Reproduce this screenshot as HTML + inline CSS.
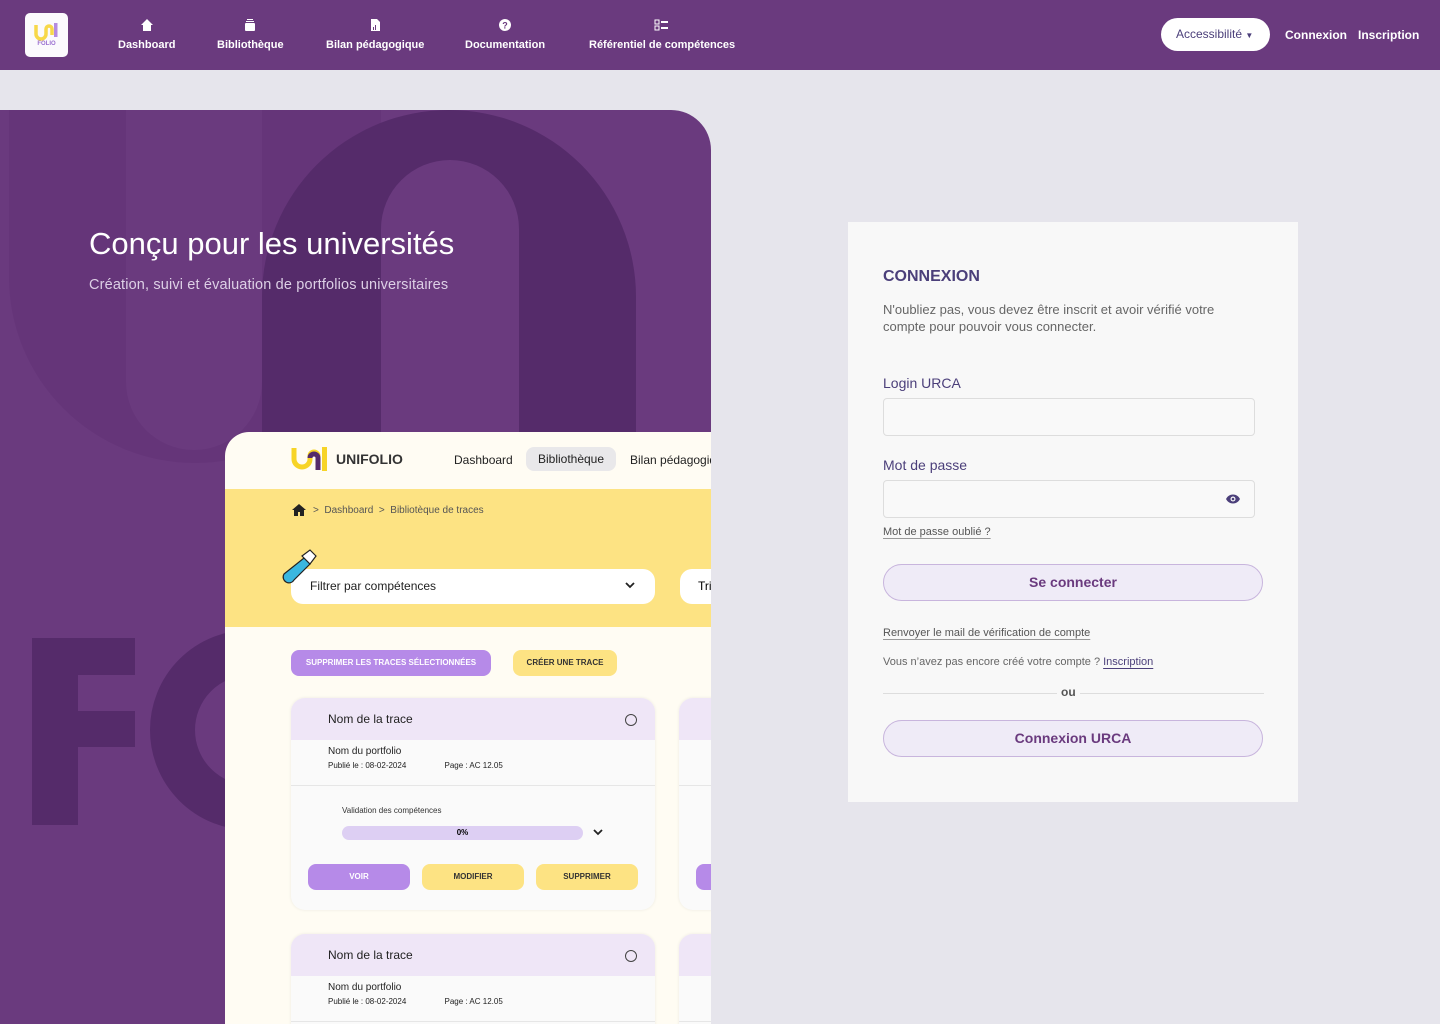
<!DOCTYPE html>
<html><head><meta charset="utf-8"><style>
*{box-sizing:border-box;margin:0;padding:0}
html,body{width:1440px;height:1024px;overflow:hidden}
body{background:#e6e5ec;font-family:"Liberation Sans",sans-serif;position:relative}
.nav{position:absolute;left:0;top:0;width:1440px;height:70px;background:#6a3a7e;color:#fff}
.logo{position:absolute;left:25px;top:13px;width:43px;height:44px;background:#fbfafd;border-radius:5px}
.ni{position:absolute;top:18px;font-size:11px;font-weight:bold;text-align:center;color:#fff;white-space:nowrap}
.ni svg{display:block;margin:0 auto 7px}
.acc{position:absolute;left:1161px;top:18px;width:109px;height:33px;background:#fff;border-radius:17px;color:#4b3f7a;font-size:12px;line-height:33px;padding-left:15px}
.panel{position:absolute;left:0;top:110px;width:711px;height:914px;background:#6a3a7e;border-top-right-radius:40px;overflow:hidden}
.a{position:absolute}
.mock{position:absolute;left:225px;top:432px;width:486px;height:592px;background:#fffcf3;border-top-left-radius:24px;overflow:hidden}
.card{position:absolute;left:66px;width:364px;background:#fafafa;border-radius:14px;box-shadow:0 0 3px rgba(0,0,0,.08);overflow:hidden}
.ch{height:42px;background:#efe6f7;font-size:12px;color:#222;padding:14px 0 0 37px;position:relative}
.rad{position:absolute;right:18px;top:16px;width:12px;height:12px;border:1px solid #444;border-radius:50%}
.cb{padding:6px 0 0 37px;font-size:10px;color:#222;height:46px;border-bottom:1px solid #e6e6e6}
.sm{font-size:8px;margin-top:4px}
.btn{position:absolute;top:166px;width:102px;height:26px;border-radius:8px;font-size:8px;font-weight:bold;text-align:center;line-height:26px}
.login{position:absolute;left:848px;top:222px;width:450px;height:580px;background:#f8f8f8}
.lbl{position:absolute;left:35px;font-size:14px;color:#4b3f7a}
.inp{position:absolute;left:35px;width:372px;height:38px;border:1px solid #ddd;border-radius:4px;background:#f9f9f9}
.pb{position:absolute;left:35px;width:380px;height:37px;border:1px solid #c8b5dd;border-radius:19px;background:#efebf7;color:#6a3a7e;font-weight:bold;font-size:14px;text-align:center;line-height:35px}
.lk{position:absolute;left:35px;font-size:12px;color:#555;text-decoration:underline;text-decoration-color:#999;text-underline-offset:3px}
</style></head><body>
<div class="nav">
 <div class="logo"><svg width="43" height="44" viewBox="0 0 43 44"><path d="M11 12v9a5 5 0 0 0 10 0v-5a3 3 0 0 1 6 0v6" stroke="#f7d84a" stroke-width="3.5" fill="none"/><rect x="29" y="10" width="3.5" height="14" fill="#b48be0"/><text x="21.5" y="32" font-size="6" fill="#9a6fd0" text-anchor="middle" font-family="Liberation Sans" font-weight="bold">FOLIO</text></svg></div>
 <div class="ni" style="left:118px"><svg width="14" height="14" viewBox="0 0 14 14"><path d="M7 1L1 7h2v6h8V7h2z" fill="#fff"/></svg>Dashboard</div>
 <div class="ni" style="left:217px"><svg width="14" height="14" viewBox="0 0 14 14"><rect x="2" y="5" width="10" height="8" rx="1" fill="#fff"/><rect x="3" y="3" width="8" height="1" fill="#fff"/><rect x="4" y="1" width="6" height="1" fill="#fff"/></svg>Bibliothèque</div>
 <div class="ni" style="left:326px"><svg width="14" height="14" viewBox="0 0 14 14"><path d="M3 1h6l3 3v9H3z" fill="#fff"/><rect x="5" y="9" width="1" height="3" fill="#6a3a7e"/><rect x="7" y="7" width="1" height="5" fill="#6a3a7e"/></svg>Bilan pédagogique</div>
 <div class="ni" style="left:465px"><svg width="14" height="14" viewBox="0 0 14 14"><circle cx="7" cy="7" r="6" fill="#fff"/><text x="7" y="10.5" font-size="9" text-anchor="middle" fill="#6a3a7e" font-weight="bold" font-family="Liberation Sans">?</text></svg>Documentation</div>
 <div class="ni" style="left:589px"><svg width="16" height="14" viewBox="0 0 16 14"><rect x="1" y="2" width="4" height="4" fill="none" stroke="#fff"/><rect x="7" y="3" width="7" height="2" fill="#fff"/><rect x="1" y="8" width="4" height="4" fill="none" stroke="#fff"/><rect x="7" y="9" width="7" height="2" fill="#fff"/></svg>Référentiel de compétences</div>
 <div class="acc">Accessibilité <span style="font-size:8px">▼</span></div>
 <div style="position:absolute;left:1285px;top:28px;font-size:12px;font-weight:bold">Connexion</div>
 <div style="position:absolute;left:1358px;top:28px;font-size:12px;font-weight:bold">Inscription</div>
</div>

<div class="panel">
 <div class="a" style="left:9px;top:0;width:372px;height:353px;background:#653579;border-radius:0 0 186px 186px"></div>
 <div class="a" style="left:126px;top:0;width:136px;height:340px;background:#6a3a7e;border-radius:0 0 68px 68px"></div>
 <div class="a" style="left:262px;top:0;width:374px;height:914px;background:#552b6a;border-radius:187px 187px 0 0"></div>
 <div class="a" style="left:381px;top:50px;width:138px;height:864px;background:#6a3a7e;border-radius:69px 69px 0 0"></div>
 <div class="a" style="left:32px;top:528px;width:103px;height:187px;background:#552b6a"></div>
 <div class="a" style="left:78px;top:565px;width:57px;height:36px;background:#6a3a7e"></div>
 <div class="a" style="left:78px;top:637px;width:57px;height:78px;background:#6a3a7e"></div>
 <div class="a" style="left:150px;top:520px;width:200px;height:200px;border:45px solid #552b6a;border-radius:50%"></div>
 <div class="a" style="left:89px;top:116px;font-size:31px;color:#fff">Conçu pour les universités</div>
 <div class="a" style="left:89px;top:167px;font-size:14.5px;color:#ddd0e6;letter-spacing:0.15px">Création, suivi et évaluation de portfolios universitaires</div>
</div>

<div class="mock">
 <svg class="a" style="left:65px;top:14px" width="40" height="26" viewBox="0 0 40 26"><path d="M4 2v11a8 8 0 0 0 16 0v-3a4 4 0 0 1 8 0v14" stroke="#f7d427" stroke-width="5" fill="none"/><path d="M20 12a4 4 0 0 1 8 0v12" stroke="#552b6a" stroke-width="5" fill="none"/><rect x="32" y="1" width="5" height="24" fill="#f7d427"/></svg>
 <div class="a" style="left:111px;top:19px;font-size:14px;font-weight:bold;color:#333">UNIFOLIO</div>
 <div class="a" style="left:229px;top:21px;font-size:12px;color:#222">Dashboard</div>
 <div class="a" style="left:301px;top:15px;width:90px;height:24px;background:#e9e8ea;border-radius:8px;font-size:12px;color:#222;text-align:center;line-height:24px">Bibliothèque</div>
 <div class="a" style="left:405px;top:21px;font-size:12px;color:#222;white-space:nowrap">Bilan pédagogique</div>
 <div class="a" style="left:0;top:57px;width:486px;height:138px;background:#fde383"></div>
 <svg class="a" style="left:67px;top:72px" width="14" height="12" viewBox="0 0 14 12"><path d="M7 0L0 6h2v6h4V8h2v4h4V6h2z" fill="#222"/></svg>
 <div class="a" style="left:88px;top:73px;font-size:10px;color:#555">&gt;&nbsp; Dashboard &nbsp;&gt;&nbsp; Bibliotèque de traces</div>
 <div class="a" style="left:66px;top:137px;width:364px;height:35px;background:#fff;border-radius:12px;font-size:12px;color:#222;padding:10px 0 0 19px">Filtrer par compétences<svg style="position:absolute;right:20px;top:13px" width="10" height="7" viewBox="0 0 10 7"><path d="M1 1l4 4 4-4" stroke="#222" stroke-width="1.8" fill="none"/></svg></div>
 <div class="a" style="left:455px;top:137px;width:60px;height:35px;background:#fff;border-radius:12px;font-size:12px;padding:10px 0 0 18px">Tri</div>
 <svg class="a" style="left:55px;top:112px" width="42" height="40" viewBox="0 0 42 40"><path d="M4 30l20-16 6 6-16 16a4 4 0 0 1-10-6z" fill="#3ab7e0" stroke="#222" stroke-width="1.2"/><path d="M22 12l8-6 6 6-6 8z" fill="#fff" stroke="#222" stroke-width="1.2"/></svg>
 <div class="a" style="left:66px;top:218px;width:200px;height:26px;background:#b68ae8;border-radius:8px;color:#fff;font-size:8px;font-weight:bold;text-align:center;line-height:26px">SUPPRIMER LES TRACES SÉLECTIONNÉES</div>
 <div class="a" style="left:288px;top:218px;width:104px;height:26px;background:#fde383;border-radius:8px;color:#333;font-size:8px;font-weight:bold;text-align:center;line-height:26px">CRÉER UNE TRACE</div>
 <div class="card" style="top:266px;height:212px">
  <div class="ch">Nom de la trace<div class="rad"></div></div>
  <div class="cb">Nom du portfolio<div class="sm">Publié le : 08-02-2024 <span style="margin-left:36px">Page : AC 12.05</span></div></div>
  <div class="a" style="left:51px;top:108px;font-size:8px;color:#333">Validation des compétences</div>
  <div class="a" style="left:51px;top:128px;width:241px;height:14px;background:#ddcff3;border-radius:7px;font-size:8px;font-weight:bold;text-align:center;line-height:14px">0%</div>
  <svg class="a" style="left:302px;top:131px" width="10" height="7" viewBox="0 0 10 7"><path d="M1 1l4 4 4-4" stroke="#222" stroke-width="1.8" fill="none"/></svg>
  <div class="btn" style="left:17px;background:#b68ae8;color:#fff">VOIR</div>
  <div class="btn" style="left:131px;background:#fde383;color:#333">MODIFIER</div>
  <div class="btn" style="left:245px;background:#fde383;color:#333">SUPPRIMER</div>
 </div>
 <div class="card" style="left:454px;top:266px;height:212px"><div class="ch"></div><div class="cb"></div><div class="btn" style="left:17px;background:#b68ae8"></div></div>
 <div class="card" style="top:502px;height:120px">
  <div class="ch">Nom de la trace<div class="rad"></div></div>
  <div class="cb">Nom du portfolio<div class="sm">Publié le : 08-02-2024 <span style="margin-left:36px">Page : AC 12.05</span></div></div>
 </div>
 <div class="card" style="left:454px;top:502px;height:120px"><div class="ch"></div><div class="cb"></div></div>
</div>

<div class="login">
 <div class="a" style="left:35px;top:46px;font-size:16px;font-weight:bold;color:#4b3f7a">CONNEXION</div>
 <div class="a" style="left:35px;top:79px;width:360px;font-size:13px;line-height:17px;color:#666">N'oubliez pas, vous devez être inscrit et avoir vérifié votre compte pour pouvoir vous connecter.</div>
 <div class="lbl" style="top:153px">Login URCA</div>
 <div class="inp" style="top:176px"></div>
 <div class="lbl" style="top:235px">Mot de passe</div>
 <div class="inp" style="top:258px"><svg style="position:absolute;right:13px;top:12px" width="16" height="12" viewBox="0 0 16 12"><path d="M1 6c3-6 11-6 14 0-3 6-11 6-14 0z" fill="#4b3f7a"/><circle cx="8" cy="6" r="2.5" fill="#f9f9f9"/><circle cx="8" cy="6" r="1.3" fill="#4b3f7a"/></svg></div>
 <div class="lk" style="top:304px;font-size:11px">Mot de passe oublié ?</div>
 <div class="pb" style="top:342px">Se connecter</div>
 <div class="lk" style="top:405px;font-size:11px">Renvoyer le mail de vérification de compte</div>
 <div class="a" style="left:35px;top:434px;font-size:11px;color:#666">Vous n’avez pas encore créé votre compte ? <span style="color:#4b3f7a;text-decoration:underline;text-underline-offset:3px">Inscription</span></div>
 <div class="a" style="left:35px;top:471px;width:381px;height:1px;background:#ddd"></div>
 <div class="a" style="left:209px;top:463px;padding:0 4px;background:#f8f8f8;font-size:12px;font-weight:bold;color:#555">ou</div>
 <div class="pb" style="top:498px">Connexion URCA</div>
</div>
</body></html>
